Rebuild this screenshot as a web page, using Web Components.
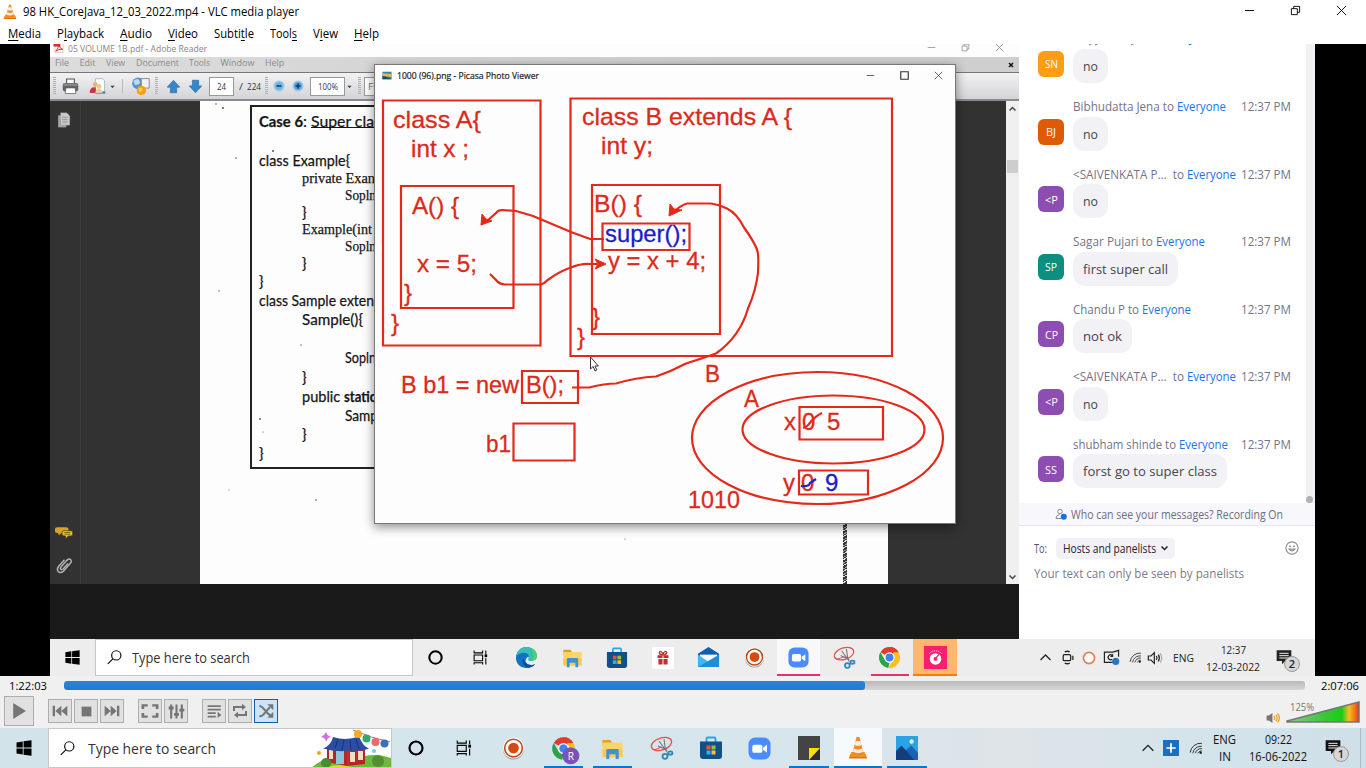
<!DOCTYPE html>
<html lang="en">
<head>
<meta charset="utf-8">
<title>VLC media player</title>
<style>
html,body{margin:0;width:1366px;height:768px;overflow:hidden;background:#fff;font-family:"Open Sans","Noto Sans",sans-serif;font-size:12px;color:#000}
</style>
</head>
<body>
<vlc-app></vlc-app>
<script>
const define = (name, html, setup) => {
  const tpl = document.createElement('template');
  tpl.innerHTML = html;
  customElements.define(name, class extends HTMLElement {
    connectedCallback() {
      if (this.shadowRoot) return;
      this.attachShadow({ mode: 'open' }).append(document.importNode(tpl.content, true));
      if (setup) setup(this, this.shadowRoot);
    }
  });
};

/* Text squeezed or stretched horizontally to a given width. */
define('fit-text', `<style>:host{display:inline-block;white-space:pre;flex:none}span{display:inline-block;transform-origin:0 50%}</style><span><slot></slot></span>`, (el, root) => {
  const w = +el.getAttribute('w');
  const s = root.querySelector('span');
  const n = s.getBoundingClientRect().width;
  el.style.width = w + 'px';
  if (n) s.style.transform = 'scaleX(' + (w / n) + ')';
});

const chrome = `<path fill="#e33b2e" d="M12 12L3.300 7A10 10 0 0 1 20.700 7z"/><path fill="#e33b2e" d="M12 2a10 10 0 0 1 8.700 5H12z"/><path fill="#2ca24c" d="M3.300 7l4.400 7.600L12 17l-1.200 5A10 10 0 0 1 3.300 7z"/><path fill="#fbc116" d="M20.700 7A10 10 0 0 1 10.800 22l5.300-9.200L15.500 7z"/><circle cx="12" cy="12" r="5" fill="#fff"/><circle cx="12" cy="12" r="3.800" fill="#4182ee"/>`;
const ICONS = {
  cone: `<path fill="#e67300" d="M3 18h18l2 4.500H1z"/><path fill="#f78f1e" d="M4 16h16l1.500 5h-19z"/><path fill="#f58a1a" d="M10.300 1h3.400L19 18.500q-7 3.500-14 0z"/><path fill="#f1efed" d="M9.200 5h5.600l1.200 4q-4 1.700-8 0zM7 12.500q5 2 10 0l1 3.300q-6 2.700-12 0z"/>`,
  win: `<path d="M3 5.300l7.500-1.100v7.300H3zM11.500 4L21 2.700v8.800h-9.500zM3 12.500h7.500v7.300L3 18.700zM11.500 12.500H21v8.800L11.500 20z"/>`,
  search: `<g fill="none" stroke="#111" stroke-width="1.700"><circle cx="14.500" cy="9" r="6.500"/><path d="M10 13.500L2.500 21"/></g>`,
  cortana: `<circle cx="12" cy="12" r="7.800" fill="none" stroke="#000" stroke-width="2.600"/>`,
  tasks: `<g fill="none" stroke="#000" stroke-width="1.500"><path d="M3 2v3.500h12V2M3 8.500h12v8H3zM3 22v-2.500h12V22M19.500 2v5M19.500 13v9"/></g><path d="M17.800 7.500h3.600v4h-3.600z"/>`,
  edge: `<path fill="#1272c4" d="M22 11C22 5 17.500 1 12 1 6 1 1 6 1 12.500 1 18.500 6 23 12 23c4 0 7-1.500 9-4-5 2-10 0-10-4.500z"/><path fill="#35c1b0" d="M1 11.500C2 5 6.500 1 12 1c6 0 11 4 11 9.200 0 4-3 5.800-6 5.800-2.500 0-3.500-.8-3.500-1.800s1-1.300 1-3C14.500 8.500 12 7 9 7c-4 0-7 2-8 4.500z"/><path fill="#60d05c" d="M17 2.300c3.600 1.700 6 4.500 6 8 0 3.500-2.500 5.700-6 5.700 3-2 3-9 0-13.700z" opacity=".8"/><path fill="#0c4f9e" d="M8.500 13c-2 4 .5 9 5.500 9.500 3-.3 5.500-1.500 7-3.500-5 2-11.500 0-12.500-6z"/><path fill="#ededed" d="M14 11.300c1 2.200-1 2.400-.4 3.600.7 1.200 4.500 1.600 6.900-.3l.6 3.600c-4 2.200-8.600.5-9.600-3-.4-2 1-3.200 2.500-3.900z"/>`,
  folder: `<path fill="#e0a01d" d="M1.500 3h8l1.500 2v4h-9.500z"/><path fill="#fbd46b" d="M1.500 5.800h21V21h-21z"/><path fill="#f9c958" d="M1.500 13h21v8h-21z"/><path fill="#3f92cf" d="M5.500 14q0-1.500 1.500-1.500h10q1.500 0 1.500 1.500v9h-3.200v-5H8.700v5H5.500z"/>`,
  store: `<path fill="none" stroke="#2aa4e4" stroke-width="1.800" d="M7.500 6V2.500q0-1 1-1h7q1 0 1 1V6"/><path fill="#124f87" d="M1 5.500h22V20q0 3-3 3H4q-3 0-3-3z"/><path fill="#ec5426" d="M7.500 9.500h4v4h-4z"/><path fill="#8bc53f" d="M12.500 9.500h4v4h-4z"/><path fill="#2fb1eb" d="M7.500 14.500h4v4h-4z"/><path fill="#fbc02a" d="M12.500 14.500h4v4h-4z"/>`,
  gift: `<path fill="#fff" d="M0 0h24v24H0z"/><path fill="#b8342e" d="M6 9h5.500v3H6zM12.500 9H18v3h-5.500zM7 13h4.500v6H7zM12.500 13H17v6h-4.500z"/><path fill="none" stroke="#b8342e" stroke-width="1.500" d="M12 8.500c-5 0-5-4-2-3.500 1.500.3 2 3.500 2 3.500s.5-3.200 2-3.500c3-.5 3 3.500-2 3.500z"/>`,
  mail: `<path fill="#0d62ae" d="M12 1l11 7v5H1V8z"/><path fill="#f5f9fc" d="M3 9h18v7H3z"/><path fill="#41b6ef" d="M1 9l11 7.500L23 9v13H1z"/><path fill="#1a8ed8" d="M1 22l22-13v13z"/>`,
  rec: `<circle cx="12" cy="12.500" r="11" fill="#999"/><circle cx="12" cy="11.500" r="11" fill="#fff"/><circle cx="12" cy="11.500" r="9.200" fill="none" stroke="#c44a1c" stroke-width="1.700"/><circle cx="12" cy="11.500" r="5.600" fill="#d34b10"/>`,
  zoom: `<rect x=".5" y=".5" width="23" height="23" rx="7" fill="#4a8cff"/><rect x="4.500" y="8" width="10.500" height="8.500" rx="2" fill="#fff"/><path fill="#fff" d="M15.800 11l4-2.800v8l-4-2.700z"/>`,
  snip: `<g fill="none"><ellipse cx="11.500" cy="8" rx="10.500" ry="6" transform="rotate(-18 11.500 8)" stroke="#e2504f" stroke-width="1.300"/><path stroke="#e2504f" d="M4 14l8-3"/><path stroke="#777" stroke-width="1.100" d="M9 5l8 11M14 3l1.500 11M8 10l9 4"/><circle cx="15" cy="20.300" r="2.500" stroke="#2d86bd" stroke-width="1.800"/><ellipse cx="20.300" cy="17" rx="2.200" ry="1.700" stroke="#2d86bd" stroke-width="1.800"/></g>`,
  chrome,
  chromeR: chrome + `<circle cx="18.500" cy="18.500" r="7.600" fill="#7a52b8"/><text x="18.500" y="22" font-size="9" fill="#fff" text-anchor="middle" font-family="Open Sans,sans-serif">R</text>`,
  tile: `<path fill="#f8206c" d="M0 0h24v24H0z"/><circle cx="12" cy="13.500" r="6" fill="#fff"/><circle cx="12" cy="13.500" r="2" fill="#f8206c"/><path stroke="#f8206c" stroke-width="1.400" d="M12 13l4-4.500"/><path fill="none" stroke="#fff" stroke-dasharray="1 1" d="M5.500 8a8.500 8.500 0 0 1 13 0"/>`,
  sticky: `<path fill="#444" d="M0 0h24v24H0z"/><path fill="#2d2d2d" d="M24 12v12H12z"/><path fill="#fbe000" d="M12 12h12L12 24z"/>`,
  photos: `<path fill="#29a3e6" d="M0 0h24v24H0z"/><path fill="#1b62b5" d="M5 19L16.500 9.500 24 17v7H5z"/><path fill="#123e7c" d="M0 15l6-5.500L20 24H0z"/><circle cx="17" cy="5.500" r="2.300" fill="#e9f6fd"/>`,
  chev: `<path fill="none" stroke="#222" stroke-width="2" d="M4 16l8-8 8 8"/>`,
  cam: `<g fill="none" stroke="#222" stroke-width="2"><rect x="3.500" y="7.500" width="12" height="9.500" rx="2"/><path d="M19 9v7M6 3q4-2 8 0M6 21q4 2 8 0"/></g>`,
  ring: `<circle cx="12" cy="12" r="9.500" fill="#fff" stroke="#dc8058" stroke-width="3"/>`,
  sync: `<g fill="none" stroke="#222" stroke-width="1.700"><path d="M22 11V2l-8 2.500H2V19h12"/><path d="M13 9a3.500 3.500 0 1 0 0 5.500M13.500 7.500v3h-3"/></g><circle cx="18" cy="17.500" r="5" fill="#2d73c4"/>`,
  wifi: `<g fill="none" stroke="#333" stroke-width="1.700"><path d="M2 20A18 18 0 0 1 22 4"/><path d="M6.500 21A14 14 0 0 1 22 9"/><path d="M11 21a10 10 0 0 1 11-8"/><path d="M15.500 21a6 6 0 0 1 6.500-4"/></g><circle cx="20" cy="20" r="2"/>`,
  vol: `<g fill="none" stroke="#222" stroke-width="1.800"><path d="M2 9h4l5-5v16l-5-5H2z"/><path d="M14 9q2 3 0 6M17 7q3 5 0 10"/><path stroke="#aaa" d="M20 5q4 7 0 14"/></g>`,
  plus: `<path fill="#1c6dc4" d="M0 0h24v24H0z"/><path stroke="#fff" stroke-width="2.600" d="M12 5v14M5 12h14"/>`,
  note: `<path d="M1 2h22v16h-9l-5 5v-5H1z"/><path stroke="#eee" stroke-width="1.500" d="M5 6.500h14M5 10h14M5 13.500h14"/>`,
  min: `<path stroke="currentColor" stroke-width="2" d="M2 12h20"/>`,
  max: `<path fill="none" stroke="currentColor" stroke-width="3" d="M2 2h20v20H2z"/>`,
  restore: `<path fill="none" stroke="currentColor" stroke-width="2" d="M3 8h13v13H3zM8 8V3h13v13h-5"/>`,
  close: `<path fill="none" stroke="currentColor" stroke-width="2" d="M2 2l20 20M22 2L2 22"/>`,
  pdf: `<path fill="#fafafa" stroke="#aaa" d="M4 1h13l5 5v17H4z"/><path fill="#c33" d="M1 1h15v9H1z"/><path fill="none" stroke="#d22" stroke-width="2" d="M6 20q6-6 7-14 1 8 8 10-8-1-15 4z"/>`,
  printer: `<path fill="#f8f8f8" stroke="#555" stroke-width="1.500" d="M6.500 1.500h11V9h-11z"/><rect x="1" y="7" width="22" height="12" rx="3" fill="#626468"/><path fill="#8a8d90" d="M2 8h20v3H2z"/><path fill="#fff" stroke="#555" d="M5.500 14h13l1 8h-15z"/>`,
  users: `<path fill="#fff" stroke="#8ab" d="M9 1h10l3 3v17H9z"/><path fill="#2f80c8" d="M9 19h14v3H9z"/><circle cx="9" cy="9" r="3.500" fill="#eab66c"/><circle cx="14" cy="12" r="3.500" fill="#f2c888"/><path fill="#c8354a" d="M1 21q0-9 8-8l2 8z"/><path fill="#f0c8a0" d="M9 21q0-6 5-6t5 6z"/>`,
  globe: `<circle cx="9" cy="8" r="7.500" fill="#5293d0"/><path fill="#bcd9ef" d="M3 5q6-5 8 0t-6 5z"/><path fill="#f1f1f1" stroke="#777" d="M13 2h10v12H13z"/><circle cx="13" cy="17" r="6" fill="#f2a11c"/><circle cx="12" cy="16" r="2.500" fill="#fbcb58"/>`,
  up: `<path fill="#3487cb" stroke="#2568a5" d="M12 2l10 11h-5v9H7v-9H2z"/>`,
  down: `<path fill="#3487cb" stroke="#2568a5" d="M12 22L2 11h5V2h10v9h5z"/>`,
  zin: `<circle cx="12" cy="12" r="11" fill="#9cc8ea"/><circle cx="12" cy="12" r="7.500" fill="#4c9cd8"/><path stroke="#153a66" stroke-width="3" d="M12 7v10M7 12h10"/>`,
  zout: `<circle cx="12" cy="12" r="11" fill="#9cc8ea"/><circle cx="12" cy="12" r="7.500" fill="#6cb0e2"/><path stroke="#153a66" stroke-width="3" d="M7 12h10"/>`,
  caret: `<path d="M2 8h20L12 19z"/>`,
  pages: `<path fill="#a9a9a9" d="M2 5h14v18H2z"/><path fill="#c9c9c9" stroke="#777" stroke-width=".6" d="M6 1h11l5 5v14H6z"/><path stroke="#888" stroke-width="1.300" d="M9 8h9M9 11.500h9M9 15h9"/>`,
  talk: `<path fill="#d6a51a" d="M3 2h12q3 0 3 3v4q0 3-3 3H9l-4 4-1-4H3Q0 12 0 9V5q0-3 3-3z"/><path fill="#e9bd2c" stroke="#4a3d10" d="M12 8h9q2.500 0 2.500 2.500v4Q23.500 17 21 17h-3l-4 5v-5h-2q-2.500 0-2.500-2.500v-4Q9.500 8 12 8z"/><path stroke="#6b5310" stroke-width="1.200" d="M12.500 11h8M12.500 14h8"/>`,
  clip: `<path fill="none" stroke="#b5b5b5" stroke-width="2" d="M17 9l-7 8q-2.500 2-4-.5 0-1 1-2.500l9-10q3-2.500 5 0 1.500 2.500-.5 4.500L10.500 20q-4 3.500-7.500.5-2.500-3.500.5-7L12 4"/>`,
  xbold: `<path stroke="#111" stroke-width="6" d="M4 4l16 16M20 4L4 20"/>`,
  picasa: `<path fill="#2c86b8" d="M1 2h22v20H1z"/><path fill="#f0b83a" d="M1 6l22 2v8L1 13z"/><path fill="#15506e" d="M1 13q10 1 22 8v1H1z"/>`,
  who: `<g fill="none" stroke="#888a96" stroke-width="2"><circle cx="10" cy="7" r="4.500"/><path d="M12 21H2q0-7 7-8"/></g><circle cx="17.500" cy="17.500" r="6" fill="#0e71eb"/>`,
  smile: `<g fill="none" stroke="#8c8c96" stroke-width="2"><circle cx="12" cy="12" r="10.500"/><path d="M7 14q5 6 10 0z"/></g><circle cx="8.500" cy="9" r="1.500" fill="#777"/><circle cx="15.500" cy="9" r="1.500" fill="#777"/>`,
  play: `<path d="M2 0l22 12L2 24z"/>`,
  prev: `<path d="M1 4h3.500v16H1zM14 4v16L5 12zM23 4v16l-9-8z"/>`,
  next: `<path d="M19.500 4H23v16h-3.500zM1 4v16l9-8zM10 4v16l9-8z"/>`,
  stop: `<path d="M3 3h18v18H3z"/>`,
  full: `<path fill="none" stroke="currentColor" stroke-width="3.500" d="M2.500 9V3.500H9M15 3.500h6.500V9M21.500 15v5.500H15M9 20.500H2.500V15"/>`,
  eq: `<path stroke="currentColor" stroke-width="3" d="M4.500 2v20M12 2v20M19.500 2v20"/><path d="M1 5h7v4H1zM8.500 14h7v4h-7zM16 8h7v4h-7z"/>`,
  list: `<path stroke="currentColor" stroke-width="2.800" d="M1 3.500h21M1 9h21M1 14.500h13M1 20h13"/><path d="M17 12.500l6 5-6 5z"/>`,
  loop: `<path fill="none" stroke="currentColor" stroke-width="3" d="M3 12V6h14M21 12v6H7"/><path d="M15 1l6 5-6 5zM9 13l-6 5 6 5z"/>`,
  shuffle: `<path fill="none" stroke="currentColor" stroke-width="3" d="M2 4q4 1 6 4l7 8 4 3M2 20q5 0 8-5l8-9"/><path d="M14 2h9v9zM23 13v9h-9z"/>`,
  speaker: `<path fill="#757575" d="M1 7h4l6-5v20l-6-5H1z"/><path fill="none" stroke="#f59a23" stroke-width="2.200" d="M14 8q2 4 0 8M17 5.500q4 6.500 0 13M20 3q6 9 0 18"/>`
};
define('ui-icon', `<style>:host{display:inline-block;flex:none}svg{display:block;width:100%;height:100%;overflow:visible}</style><svg viewBox="0 0 24 24" fill="currentColor" preserveAspectRatio="none"></svg>`, (el, root) => {
  root.querySelector('svg').innerHTML = ICONS[el.getAttribute('name')];
  const s = +el.getAttribute('s') || 20;
  el.style.width = s + 'px';
  el.style.height = (+el.getAttribute('h') || s) + 'px';
});

define('vlc-titlebar', `<style>
:host{display:flex;align-items:center;height:24px;padding:0 19px 0 3px;box-sizing:border-box;background:#fff}
fit-text{margin-left:6px;font-size:12px;line-height:24px}
.sp{flex:1}.w{display:flex;gap:35px;align-items:center;height:21px;align-self:flex-start}
</style><ui-icon name="cone" s="14" h="16"></ui-icon><fit-text w="276">98 HK_CoreJava_12_03_2022.mp4 - VLC media player</fit-text><span class="sp"></span>
<span class="w"><ui-icon name="min" s="11"></ui-icon><ui-icon name="restore" s="11"></ui-icon><ui-icon name="close" s="11"></ui-icon></span>`);

define('vlc-menubar', `<style>:host{display:flex;gap:16px;padding-left:8px;height:20px;background:#fff;line-height:20px;font-size:12px}u{text-decoration-thickness:1px;text-underline-offset:2px}</style>
<fit-text w="33"><u>M</u>edia</fit-text><fit-text w="47">P<u>l</u>ayback</fit-text><fit-text w="32"><u>A</u>udio</fit-text><fit-text w="30"><u>V</u>ideo</fit-text><fit-text w="40">Subti<u>t</u>le</fit-text><fit-text w="27">Tool<u>s</u></fit-text><fit-text w="25">V<u>i</u>ew</fit-text><fit-text w="25"><u>H</u>elp</fit-text>`);

define('doc-page', `<style>
:host{display:block;width:688px;background:#fdfdfd;position:relative;overflow:hidden;color:#161616}
.box{margin:4px 0 0 50px;width:600px;height:364px;box-sizing:border-box;border:2px solid #222;padding:4px 0 0 7px;font:15px/19px Lato,sans-serif}
.l{display:flex;height:var(--h,17px);line-height:var(--h,17px);padding-left:calc(var(--i,0)*43px)}
.s{font-family:"Liberation Serif",serif;font-size:15px}
.l{-webkit-text-stroke:.25px #161616}
.u{border-bottom:1px solid #161616;height:16px;line-height:20px;box-sizing:content-box}
.scan{position:absolute;right:41px;bottom:0;width:4px;height:64px;background:repeating-linear-gradient(150deg,#333 0 2px,#999 2px 3px,#333 3px 4px,#ddd 4px 5px)}
svg{position:absolute;inset:0}
</style>
<div class="box">
<div class="l" style="--h:20px"><b><fit-text w="44">Case 6</fit-text></b><fit-text w="8">: </fit-text><span class="u"><fit-text w="63">Super cla</fit-text></span></div>
<div class="l" style="--h:20px"></div>
<div class="l" style="--h:18px"><fit-text w="91">class Example{</fit-text></div>
<div class="l s" style="--i:1;--h:18px"><fit-text w="73">private Exan</fit-text></div>
<div class="l s" style="--i:2"><fit-text w="31">Sopln</fit-text></div>
<div class="l" style="--i:1">}</div>
<div class="l s" style="--i:1"><fit-text w="70">Example(int</fit-text></div>
<div class="l s" style="--i:2"><fit-text w="31">Sopln</fit-text></div>
<div class="l" style="--i:1">}</div>
<div class="l" style="--h:18px">}</div>
<div class="l" style="--h:20px"><fit-text w="115">class Sample exten</fit-text></div>
<div class="l" style="--i:1;--h:19px"><fit-text w="61">Sample(){</fit-text></div>
<div class="l" style="--h:19px"></div>
<div class="l" style="--i:2;--h:19px"><fit-text w="31">Sopln</fit-text></div>
<div class="l" style="--i:1;--h:20px">}</div>
<div class="l" style="--i:1;--h:19px"><fit-text w="42">public </fit-text><b><fit-text w="32">static</fit-text></b></div>
<div class="l" style="--i:2;--h:19px"><fit-text w="33">Samp</fit-text></div>
<div class="l" style="--i:1;--h:19px">}</div>
<div class="l" style="--h:19px">}</div>
</div>
<div class="scan"></div>
<svg width="688" height="483" fill="#555"><circle cx="73" cy="50" r="1"/><circle cx="16" cy="3" r=".8"/><circle cx="23" cy="7" r="1"/><circle cx="36" cy="57" r=".8"/><circle cx="19" cy="190" r=".7"/><circle cx="60" cy="318" r=".9"/><circle cx="116" cy="399" r=".8"/><circle cx="101" cy="244" r=".7"/><circle cx="29" cy="389" r=".5"/><circle cx="425" cy="438" r=".6"/><circle cx="63" cy="331" r=".6"/></svg>`);

define('reader-window', `<style>
:host{display:grid;grid-template-rows:13px 15px 29px 483px 1fr;background:#1a1a1a;position:relative;overflow:hidden;font-size:9px}
.t{background:#fdfdfd;display:flex;align-items:center;padding:0 15px 0 3px;color:#888;gap:4px;overflow:hidden}
.t fit-text{line-height:11px;margin-bottom:5px}.t ui-icon{margin-bottom:6px}.sp{flex:1}
.w{display:flex;gap:25px}
.m{background:linear-gradient(90deg,#dcdcdc,#cfcfcf 70%);display:flex;align-items:center;color:#8b8b8b;padding-left:5px;gap:10.500px;line-height:10px}
.m fit-text{margin-bottom:3px}
.b{border-top:1px solid #777;border-bottom:2px solid #8a8a8a;box-sizing:border-box;background:linear-gradient(#f2f2f4,#d4d4d8);display:flex;align-items:center;color:#333;padding-left:2px}
.b>span{display:flex;justify-content:center;align-items:center;flex:none}
.f{background:#fff;border:1px solid #999;box-sizing:border-box;height:19px}
.g i{width:3px;height:18px;background:repeating-linear-gradient(#b0b0b4 0 1px,transparent 1px 2px)}
.body{display:grid;grid-template-columns:31px 119px 688px 118px 13px;background:#323232}
.nav{border-right:1px solid #3c3c3c;display:flex;flex-direction:column;align-items:center;padding:11px 2px 10px 0;box-sizing:border-box}
.nav .sp{flex:1}
.sb{background:#f0f0f0;display:flex;flex-direction:column;align-items:center;padding:5px 0 4px;box-sizing:border-box}
.th{width:11px;height:13px;background:#cdcdcd;margin-top:49px}
photo-viewer{position:absolute;left:324px;top:20px}
</style>
<div class="t"><ui-icon name="pdf" s="11"></ui-icon><fit-text w="139">05 VOLUME 1B.pdf - Adobe Reader</fit-text><span class="sp"></span><span class="w"><ui-icon name="min" s="9"></ui-icon><ui-icon name="restore" s="9"></ui-icon><ui-icon name="close" s="9"></ui-icon></span></div>
<div class="m"><fit-text w="14">File</fit-text><fit-text w="16">Edit</fit-text><fit-text w="19">View</fit-text><fit-text w="43">Document</fit-text><fit-text w="21">Tools</fit-text><fit-text w="34">Window</fit-text><fit-text w="19">Help</fit-text><span class="sp"></span><ui-icon name="xbold" s="6" style="margin-right:5px"></ui-icon></div>
<div class="b"><span class="g" style="width:4px"><i></i></span><span style="width:28px"><ui-icon name="printer" s="17"></ui-icon></span><span style="width:26px"><ui-icon name="users" s="17"></ui-icon></span><span style="width:4px"><ui-icon name="caret" s="5"></ui-icon></span><span style="width:16px"><i style="width:1px;height:14px;background:#bbb"></i></span><span style="width:20px"><ui-icon name="globe" s="19"></ui-icon></span><span class="g" style="width:12px"><i></i></span><span style="width:22px"><ui-icon name="up" s="15"></ui-icon></span><span style="width:22px;margin-right:3px"><ui-icon name="down" s="15"></ui-icon></span><span class="f" style="width:25px"><fit-text w="9">24</fit-text></span><span style="width:30px;gap:4px;padding-left:2px;box-sizing:border-box"><fit-text w="4">/</fit-text><fit-text w="14">224</fit-text></span><span class="g" style="width:5px"><i></i></span><span style="width:19px"><ui-icon name="zout" s="12"></ui-icon></span><span style="width:19px;margin-right:3px"><ui-icon name="zin" s="12"></ui-icon></span><span class="f" style="width:35px"><fit-text w="20">100%</fit-text></span><span style="width:9px"><ui-icon name="caret" s="5"></ui-icon></span><span class="g" style="width:10px"><i></i></span><span class="f" style="width:40px;justify-content:flex-start;padding-left:3px;color:#777"><fit-text w="8">Fi</fit-text></span></div>
<div class="body"><div class="nav"><ui-icon name="pages" s="14" h="16"></ui-icon><span class="sp"></span><ui-icon name="talk" s="18" h="14"></ui-icon><ui-icon name="clip" s="17" style="margin-top:17px"></ui-icon></div><div></div><doc-page></doc-page><div></div>
<div class="sb"><svg width="7" height="5" fill="none" stroke="#444" stroke-width="1.500"><path d="M.5 4.500l3-3 3 3"/></svg><div class="th"></div><span class="sp"></span><svg width="7" height="5" fill="none" stroke="#444" stroke-width="1.500"><path d="M.5.5l3 3 3-3"/></svg></div></div>
<photo-viewer></photo-viewer>`);

define('photo-viewer', `<style>
:host{display:flex;flex-direction:column;width:582px;height:460px;box-sizing:border-box;border:1px solid #77777c;background:#fdfdfd;box-shadow:0 3px 10px rgba(0,0,0,.45)}
header{display:flex;align-items:center;height:21px;padding:0 12px 0 7px;font-size:9px;color:#222;-webkit-text-stroke:.2px #222}
fit-text{margin-left:5px}.sp{flex:1}.w{display:flex;gap:25px;color:#333}
</style><header><ui-icon name="picasa" s="10" h="9"></ui-icon><fit-text w="142">1000 (96).png - Picasa Photo Viewer</fit-text><span class="sp"></span><span class="w"><ui-icon name="min" s="9"></ui-icon><ui-icon name="max" s="9"></ui-icon><ui-icon name="close" s="9"></ui-icon></span></header><class-diagram></class-diagram>`);

define('class-diagram', `<style>:host{display:block}svg{display:block}text{font:24px "Liberation Sans",Arial,sans-serif;fill:#dc2a1a;stroke:#dc2a1a;stroke-width:.3px}.b{fill:#1c1cc8;stroke:#1c1cc8}</style>
<svg width="580" height="437" viewBox="375 86 580 437" fill="none" stroke="#e6281a" stroke-width="2.200">
<path d="M383 100.500h157.500v245H383zM401 186h112.500v122H401zM570.500 98.500H892V356H570.500zM592 185h128v149H592zM522 371h56v32h-56zM513.500 423.500h61v37h-61zM799.500 407h83.500v32.500h-83.500zM799 470.500h69v24h-69z"/>
<path d="M602.500 223.500h87V250h-87z"/>
<ellipse cx="817.500" cy="438" rx="125.500" ry="66"/><ellipse cx="833.500" cy="429.500" rx="91" ry="34"/>
<g class="t"><text x="393" y="127.500" textLength="88">class A{</text><text x="411" y="156.500" textLength="58">int x ;</text>
<text x="412" y="214" textLength="47">A() {</text><text x="417" y="272" textLength="60">x = 5;</text><text x="404" y="301">}</text><text x="391" y="331">}</text>
<text x="582" y="125" textLength="210">class B extends A {</text><text x="601" y="154" textLength="52">int y;</text>
<text x="594" y="212" textLength="48">B() {</text><text class="b" x="605" y="242" textLength="82">super();</text><text x="608" y="269" textLength="98">y = x + 4;</text><text x="592" y="325">}</text><text x="577" y="345">}</text>
<text x="401" y="393" textLength="118">B b1 = new</text><text x="526" y="393" textLength="38">B();</text><text x="486" y="451.500" textLength="25">b1</text>
<text x="705" y="382" textLength="15">B</text><text x="744" y="407" textLength="15">A</text><text x="784" y="430">x</text><text x="802" y="430">0</text><text x="827" y="430">5</text><text x="783" y="491">y</text><text x="801" y="491">0</text><text class="b" x="825" y="491">9</text><text x="688" y="508" textLength="52">1010</text></g>
<path d="M604 239h-14l-19-7-38-16-17-5-14-1q-4 0-6 3l-9 8"/><path fill="#e6281a" stroke-width="1" d="M481 225l1-11 4 5 6 2z"/>
<path d="M490 274l6 6q3 4 9 4.500h35q3 0 7-4 12-9 24-13 10-4 18-3.500h8"/><path fill="#e6281a" stroke-width="1" d="M606 264l-11-5 3 5-3 5z"/>
<path d="M572 387.500h17q16-4 27-4 20-6 40-7 15-5 30-13 16-5 30-10 24-17 32-45 8-18 10-36 1-18-1-23-3-8-13-22-7-14-17-19-8-4-16-5h-24q-7 2-15 10"/><path fill="#e6281a" stroke-width="1" d="M669 216l1-12 4 5 8 1z"/>
<path d="M803 428q4-1 6-4 6-8 13-11"/><path stroke="#2222cc" d="M801 486q8 1 9-3l6-4"/>
<path fill="#fff" stroke="#333" stroke-width="1" d="M590.500 357v12l2.600-2.500 2 4.500 1.800-1-2-4h3.500z"/>
</svg>`, (el, root) => {
  root.querySelectorAll('text[textLength]').forEach(t => t.setAttribute('lengthAdjust', 'spacingAndGlyphs'));
});

define('chat-message', `<style>
:host{display:grid;grid-template-columns:35px 218px;grid-template-rows:17.500px 34px;height:67.600px;padding-left:19px;box-sizing:border-box}
.h{grid-column:2;display:flex;justify-content:space-between;line-height:16px;font-size:12px;color:#747487}
.a{width:26px;height:26px;border-radius:6px;background:var(--c,#8e4db0);color:#fff;display:flex;align-items:center;justify-content:center;margin-top:2px;font-size:11.500px}
.b{justify-self:start;background:#f1f1f6;border-radius:12px;padding:0 10px;line-height:34px;font-size:13.500px;color:#45454e}
.e{color:#1b74e8}
</style><div class="h"></div><div class="a"></div><div class="b"></div>`, (el, root) => {
  const g = n => el.getAttribute(n);
  const esc = s => s.replace(/</g, '&lt;');
  if (g('from')) root.querySelector('.h').innerHTML = `<span><fit-text w="${g('fw')}">${esc(g('from'))} to </fit-text><fit-text class="e" w="49">Everyone</fit-text></span><fit-text w="50">12:37 PM</fit-text>`;
  else root.querySelector('.h').innerHTML = '<svg width="218" height="17" fill="none" stroke="#8a8a9a" stroke-width="1.200"><path d="M16 14l3-1.500M22 14l3-1.500M58 14l3-1.500"/><path stroke="#1b74e8" d="M116 14l3-1.500"/></svg>';
  root.querySelector('.a').innerHTML = `<fit-text w="${g('aw') || 13}">${esc(g('who'))}</fit-text>`;
  root.querySelector('.b').innerHTML = `<fit-text w="${g('tw')}">${g('text')}</fit-text>`;
});

define('zoom-chat', `<style>
:host{display:grid;grid-template-rows:459px 23px 1fr;background:#fff;overflow:hidden;color:#6e6e7e}
.list{display:grid;grid-template-columns:287px 9px;overflow:hidden}
.ms{margin-top:-12.600px}
.tr{background:#f1f1f4;display:flex;align-items:flex-end;justify-content:flex-start}.tr i{width:7px;height:7px;border-radius:4px;background:#b0b0b6;margin-bottom:2px}
.n{background:#f7f7fc;border-bottom:1px solid #e6e6ee;display:flex;align-items:center;padding-left:36px;gap:4px;font-size:12px}
.c{padding:11px 16px 0 15px}.r{display:flex;align-items:center;height:22px;font-size:12px;color:#555560}
.p{background:#f1f1f6;border-radius:5px;height:21px;display:flex;align-items:center;gap:5px;padding:0 7px;margin-left:9px;color:#23232e}
.sp{flex:1}.ph{font-size:12px;margin-top:5px;line-height:20px;color:#7c7c8a}
</style>
<div class="list"><div class="ms">
<chat-message who="SN" text="no" tw="15" style="--c:#fc9d12"></chat-message>
<chat-message from="Bibhudatta Jena" fw="104" who="BJ" aw="10" text="no" tw="15" style="--c:#de5a05"></chat-message>
<chat-message from="&lt;SAIVENKATA P... " fw="114" who="&lt;P" text="no" tw="15"></chat-message>
<chat-message from="Sagar Pujari" fw="83" who="SP" aw="12" text="first super call" tw="85" style="--c:#0c8f80"></chat-message>
<chat-message from="Chandu P" fw="69" who="CP" text="not ok" tw="39"></chat-message>
<chat-message from="&lt;SAIVENKATA P... " fw="114" who="&lt;P" text="no" tw="15"></chat-message>
<chat-message from="shubham shinde" fw="106" who="SS" aw="12" text="forst go to super class" tw="134"></chat-message>
</div><div class="tr"><i></i></div></div>
<div class="n"><ui-icon name="who" s="12"></ui-icon><fit-text w="212">Who can see your messages? Recording On</fit-text></div>
<div class="c"><div class="r"><fit-text w="13">To:</fit-text><span class="p"><fit-text w="93">Hosts and panelists</fit-text><svg width="7" height="5" fill="none" stroke="#222" stroke-width="1.500"><path d="M.5.5l3 3 3-3"/></svg></span><span class="sp"></span><ui-icon name="smile" s="14"></ui-icon></div><div class="ph"><fit-text w="210">Your text can only be seen by panelists</fit-text></div></div>`);

/* One taskbar button: icon centred in its cell, optional running underline. */
define('task-button', `<style>:host{display:flex;align-items:center;justify-content:center;flex:none;position:relative;height:100%;box-sizing:border-box}
:host([on])::after{content:"";position:absolute;left:var(--l,5px);right:var(--r,5px);bottom:0;height:2px;background:var(--u,#0078d7)}</style><slot></slot>`);
define('notify-badge', `<style>:host{display:inline-block;position:relative;width:22px;height:24px;flex:none}ui-icon{position:absolute;left:0;top:3px}b{position:absolute;left:8px;top:10px;width:14px;height:14px;border-radius:9px;border:1px solid #999;background:#d4d6d8;font:600 11px/14px "Open Sans",sans-serif;text-align:center;color:#222}</style><ui-icon name="note" s="16"></ui-icon><b><slot></slot></b>`);
define('task-search', `<style>:host{display:flex;align-items:center;flex:none;height:100%;box-sizing:border-box;border:1px solid #c4c8ca;background:#fff;padding-left:10px;gap:var(--gap,11px);font-size:14px;color:#333;overflow:hidden}</style><ui-icon name="search" s="17"></ui-icon><slot></slot>`);

define('inner-taskbar', `<style>:host{display:flex;align-items:center;background:#eeedee;height:37px}.tr{display:flex;align-items:center;flex:1;padding-left:82px;font-size:11.500px;color:#222}
.clk{display:flex;flex-direction:column;align-items:center;line-height:17px;margin-left:12px}.clk fit-text{height:17px}</style>
<task-button style="width:45px"><ui-icon name="win" s="19"></ui-icon></task-button>
<task-search style="width:318px;--gap:9px"><fit-text w="118" style="margin-bottom:1px">Type here to search</fit-text></task-search>
<task-button style="width:44px"><ui-icon name="cortana" s="19"></ui-icon></task-button>
<task-button style="width:46px"><ui-icon name="tasks" s="17"></ui-icon></task-button>
<task-button style="width:46.500px"><ui-icon name="edge" s="23"></ui-icon></task-button>
<task-button style="width:45px"><ui-icon name="folder" s="21"></ui-icon></task-button>
<task-button style="width:45.500px"><ui-icon name="store" s="22"></ui-icon></task-button>
<task-button style="width:45.500px"><ui-icon name="gift" s="22"></ui-icon></task-button>
<task-button style="width:45.500px"><ui-icon name="mail" s="23"></ui-icon></task-button>
<task-button style="width:46px"><ui-icon name="rec" s="21"></ui-icon></task-button>
<task-button on style="width:43px;background:#f8f8fa;--u:#e8316a;--l:0;--r:0"><ui-icon name="zoom" s="21"></ui-icon></task-button>
<task-button style="width:49.500px"><ui-icon name="snip" s="23"></ui-icon></task-button>
<task-button on style="width:40px;--u:#e8316a;--l:1px;--r:1px"><ui-icon name="chrome" s="25"></ui-icon></task-button>
<task-button on style="width:44px;margin-left:3.500px;background:#ffb671;--u:#ff7a00;--l:0;--r:0"><ui-icon name="tile" s="23"></ui-icon></task-button>
<div class="tr"><ui-icon name="chev" s="15" style="margin-left:-1px"></ui-icon><ui-icon name="cam" s="15" style="margin-left:8px"></ui-icon><ui-icon name="ring" s="14" style="margin-left:6px"></ui-icon><ui-icon name="sync" s="17" style="margin-left:7px"></ui-icon><ui-icon name="wifi" s="13" style="margin-left:9px"></ui-icon><ui-icon name="vol" s="16" style="margin-left:5px"></ui-icon><fit-text w="21" style="margin-left:10px">ENG</fit-text>
<div class="clk"><fit-text w="25">12:37</fit-text><fit-text w="54">12-03-2022</fit-text></div><notify-badge style="margin-left:16px">2</notify-badge></div>`);

define('outer-taskbar', `<style>:host{display:flex;align-items:center;height:40px;background:linear-gradient(90deg,#d2e3ea,#d6e6ec 60%,#dfe4e8 74%,#d3e4eb 88%,#cfdfe8)}
.tr{display:flex;align-items:center;flex:1;padding-left:208px;font-size:12px;color:#111;height:100%}
.clk{display:flex;flex-direction:column;align-items:center;line-height:17px}.clk fit-text{height:17px}.clk fit-text,.clk{flex:none}</style>
<task-button style="width:48px"><ui-icon name="win" s="20"></ui-icon></task-button>
<task-search style="width:344px;--gap:12px"><fit-text w="128">Type here to search</fit-text>
<svg width="80" height="39" viewBox="0 0 80 39" style="margin-left:auto"><path fill="#6db83e" d="M0 39q18-16 40-7 20-10 40-3v10z"/><path fill="#cfdf30" d="M14 39q14-6 30 0z"/><path fill="#b7252b" d="M16 17h38v18l-18 2-20-4z"/><path fill="#f2dec1" d="M18 20h4v10h-4zM39 23h5v10h-5zM47 22h5v9h-5z"/><path fill="#8ec7d8" d="M25 22h8v13h-8z"/><path fill="#c72b34" d="M36 19h2v17h-2zM45 20h1v14h-1z"/><path fill="#2a4ea0" d="M22 8q13 4 26-.500 4 10 10 12-7 3-20 2-12 2-26-2 8-3 10-11.500z"/><path stroke="#1a3377" fill="none" d="M27 10l-3 9M33 11l-2 10M39 11l1 10M45 10l3 10"/><circle cx="15" cy="34" r="5" fill="#468c31"/><circle cx="67" cy="32" r="6" fill="#55902e"/><path fill="none" stroke="#a77" d="M42 1q18 8 37 12"/><circle cx="47" cy="5" r="4" fill="#f2ac20"/><circle cx="55.500" cy="9.500" r="4" fill="#34a96f"/><circle cx="64.500" cy="13" r="4" fill="#e9696c"/><circle cx="73.500" cy="14.500" r="4" fill="#386fc4"/><path fill="#d46ee8" d="M15 3l1.500 3 3.500 2-3 1-1.500 3.500L13 9l-3-1 3-2z"/><circle cx="8" cy="24" r="2" fill="#f3a51e"/><circle cx="63" cy="22" r="2" fill="#64d2e6"/></svg></task-search>
<task-button style="width:48px"><ui-icon name="cortana" s="20"></ui-icon></task-button>
<task-button style="width:48px"><ui-icon name="tasks" s="18"></ui-icon></task-button>
<task-button style="width:51px"><ui-icon name="rec" s="23"></ui-icon></task-button>
<task-button on style="width:49px"><ui-icon name="chromeR" s="27"></ui-icon></task-button>
<task-button on style="width:49px"><ui-icon name="folder" s="23"></ui-icon></task-button>
<task-button style="width:49px"><ui-icon name="snip" s="24"></ui-icon></task-button>
<task-button style="width:49px"><ui-icon name="store" s="24"></ui-icon></task-button>
<task-button style="width:49px"><ui-icon name="zoom" s="23"></ui-icon></task-button>
<task-button on style="width:50px"><ui-icon name="sticky" s="22" h="24"></ui-icon></task-button>
<task-button on style="width:48px;background:#f7fafc;--l:0;--r:0"><ui-icon name="cone" s="20" h="24"></ui-icon></task-button>
<task-button on style="width:50px"><ui-icon name="photos" s="22" h="24"></ui-icon></task-button>
<div class="tr"><ui-icon name="chev" s="16"></ui-icon><ui-icon name="plus" s="16" style="margin-left:7px"></ui-icon><ui-icon name="wifi" s="14" style="margin-left:10px"></ui-icon><div class="clk" style="margin-left:10px"><fit-text w="23">ENG</fit-text><fit-text w="12">IN</fit-text></div><div class="clk" style="margin-left:13px"><fit-text w="27">09:22</fit-text><fit-text w="58">16-06-2022</fit-text></div><notify-badge style="margin-left:18px">1</notify-badge><i style="width:1px;height:40px;background:#a9bbc4;margin-left:13px"></i></div>`);

define('vlc-controls', `<style>:host{display:block;background:#f0f0f0;height:52px;overflow:hidden}
.s{display:flex;align-items:center;height:20px;padding:0 7px 0 9px;font-size:11.500px;box-sizing:border-box}
.s fit-text{margin-top:-1px}
.bar{width:1241px;height:9px;margin:-2px 16px 0 17px;border-radius:3px;background:linear-gradient(#b8b8b8,#d6d6d6);overflow:hidden}.bar i{display:block;width:801px;height:9px;border-radius:3px;background:linear-gradient(#2d85d8,#2478c8)}
.r{display:flex;align-items:center;height:30px;padding:0 6px 0 4px;color:#757575}
.b{display:flex;align-items:center;justify-content:center;width:24px;height:24px;box-sizing:border-box;border:1px solid #adadad;background:#e1e1e1;margin-right:2px;flex:none}
.v{position:relative;margin:3px 0 0 auto;display:flex;align-items:flex-end;gap:6px}.v fit-text{position:absolute;left:24px;top:-1px;font-size:10px;line-height:14px}
</style>
<div class="s"><fit-text w="38">1:22:03</fit-text><div class="bar"><i></i></div><fit-text w="38">2:07:06</fit-text></div>
<div class="r"><span class="b" style="width:30px;height:30px;margin-right:14px"><ui-icon name="play" s="14" h="16"></ui-icon></span><span class="b"><ui-icon name="prev" s="16"></ui-icon></span><span class="b"><ui-icon name="stop" s="13"></ui-icon></span><span class="b" style="margin-right:14px"><ui-icon name="next" s="16"></ui-icon></span><span class="b"><ui-icon name="full" s="18" h="16"></ui-icon></span><span class="b" style="margin-right:14px"><ui-icon name="eq" s="17"></ui-icon></span><span class="b"><ui-icon name="list" s="15"></ui-icon></span><span class="b"><ui-icon name="loop" s="16"></ui-icon></span><span class="b" style="border-color:#0c5fa8;background:#cce4f7"><ui-icon name="shuffle" s="16"></ui-icon></span>
<div class="v"><ui-icon name="speaker" s="14" h="12"></ui-icon><fit-text w="24">125%</fit-text><svg width="74" height="23"><defs><linearGradient id="g"><stop offset="0" stop-color="#8fc98f"/><stop offset=".5" stop-color="#3dc63d"/><stop offset=".76" stop-color="#18cc18"/><stop offset=".86" stop-color="#f4c020"/><stop offset=".95" stop-color="#f46a20"/><stop offset="1" stop-color="#ee2e20"/></linearGradient></defs><path d="M1 20L73 1v20H1z" fill="url(#g)" stroke="#757575" stroke-width="1.500"/></svg></div></div>`);

define('video-stage', `<style>:host{display:grid;grid-template-columns:969px 296px;grid-template-rows:595px 37px;padding:0 51px 0 50px;background:#000;height:632px;box-sizing:border-box}inner-taskbar{grid-column:1/3}</style><reader-window></reader-window><zoom-chat></zoom-chat><inner-taskbar></inner-taskbar>`);

define('vlc-app', `<style>:host{display:grid;grid-template-rows:24px 20px 632px 52px 40px;width:1366px;height:768px}</style><vlc-titlebar></vlc-titlebar><vlc-menubar></vlc-menubar><video-stage></video-stage><vlc-controls></vlc-controls><outer-taskbar></outer-taskbar>`);
</script>
</body>
</html>
